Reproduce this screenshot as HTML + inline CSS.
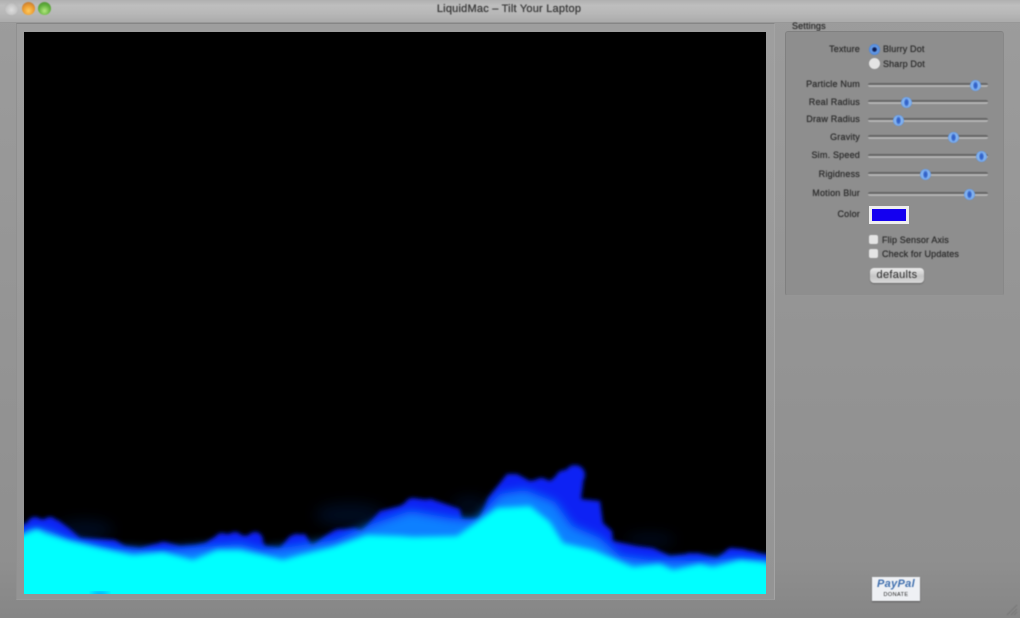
<!DOCTYPE html>
<html><head><meta charset="utf-8"><title>LiquidMac</title>
<style>
html,body{margin:0;padding:0;background:#8c8c8c}
#w{position:relative;width:1020px;height:618px;overflow:hidden;background:linear-gradient(#9c9c9c 0,#959595 300px,#8f8f8f 560px,#868686 618px);font-family:"Liberation Sans",sans-serif;color:#2a2a2a}
#w div{position:absolute}
#tb{left:0;top:0;width:1020px;height:22px;background:linear-gradient(#b0b0b0,#bebebe 25%,#b8b8b8 60%,#ababab)}
#in{left:16px;top:23px;width:759px;height:577px;box-sizing:border-box;background:linear-gradient(#9e9e9e,#949494);border-top:1px solid #868686;border-left:1px solid #909090;border-right:1px solid #a4a4a4;border-bottom:1px solid #9a9a9a}
.l{width:80px;left:780px;text-align:right;font-size:9px;letter-spacing:.2px;line-height:12px;color:#2e2e2e;text-shadow:0 0 .6px #333;filter:blur(.45px)}
.t{font-size:9px;letter-spacing:.15px;line-height:12px;color:#2e2e2e;text-shadow:0 0 .6px #333;filter:blur(.45px);white-space:nowrap}
.tr{left:868px;width:120px;height:4px;background:linear-gradient(#626262 0,#6c6c6c 45%,#b4b4b4 55%);filter:blur(.5px);border-radius:2px}
.k{width:11px;height:11px;border-radius:50%;background:radial-gradient(ellipse 25% 40% at 50% 50%,#2f5cc0 0,#3a6cd0 60%,transparent 100%),radial-gradient(circle,#9cc4f5 0,#7fb0ee 55%,#4a84dc 85%,#8aa8d8 100%);filter:blur(.4px)}
.cb{left:869px;width:9px;height:9px;background:#e4e4e4;border-radius:2px;filter:blur(.4px)}
.dot{border-radius:50%;width:13px;height:13px;top:2px;filter:blur(.5px)}
</style></head><body>
<div id="w">
<div id="tb"></div>
<div style="left:0;top:22px;width:1020px;height:1px;background:#989898"></div>
<div class="dot" style="left:5px;background:radial-gradient(circle at 50% 60%,#dedede,#c4c4c4 55%,#9a9a9a)"></div>
<div class="dot" style="left:22px;background:radial-gradient(circle at 50% 68%,#ffcb60,#ea9a30 50%,#a8683c)"></div>
<div class="dot" style="left:38px;background:radial-gradient(circle at 50% 68%,#b4e880,#5eae3a 55%,#4e8238)"></div>
<div style="left:300px;width:418px;top:2px;text-align:center;font-size:11px;letter-spacing:.22px;line-height:14px;color:#3a3a3a;text-shadow:0 0 .6px #333;filter:blur(.5px)">LiquidMac – Tilt Your Laptop</div>
<div id="in"></div>
<div style="left:24px;top:32px;width:742px;height:562px;background:#000;overflow:hidden">
<svg width="742" height="562" viewBox="24 32 742 562" style="display:block">
<defs>
<filter id="b0" x="-10%" y="-50%" width="120%" height="200%"><feGaussianBlur stdDeviation="7"/></filter>
<filter id="b1" x="-10%" y="-50%" width="120%" height="200%"><feGaussianBlur stdDeviation="2"/></filter>
<filter id="b2" x="-10%" y="-50%" width="120%" height="200%"><feGaussianBlur stdDeviation="5"/></filter>
<filter id="b3" x="-10%" y="-50%" width="120%" height="200%"><feGaussianBlur stdDeviation="2.8"/></filter>
</defs>
<g filter="url(#b0)" fill="#00205c" opacity=".35">
<ellipse cx="85" cy="530" rx="28" ry="10"/>
<ellipse cx="350" cy="515" rx="35" ry="12"/>
<ellipse cx="470" cy="505" rx="18" ry="8"/>
<ellipse cx="650" cy="540" rx="25" ry="6"/>
</g>
<g filter="url(#b1)" fill="#0a22f4">
<polygon points="14,530 24,524 40,519 58,520 70,529 80,538 115,540 125,546 140,548 155,544 165,542 180,546 195,545 205,543 218,535 235,533 245,536 258,532 265,546 280,548 290,536 305,534 312,546 325,536 335,530 355,528 362,531 380,511 400,506 413,498 437,501 460,509 462,519 480,519 488,498 507,474 517,474 530,481 543,478 550,481 562,471 577,466 584,471 583,484 581,499 600,501 603,523 612,531 613,541 637,546 653,548 670,556 697,553 717,558 730,548 743,549 750,551 776,557 776,610 14,610"/>
<circle cx="35" cy="525" r="8"/><circle cx="50" cy="525" r="8"/><circle cx="163" cy="549" r="7"/>
<circle cx="222" cy="541" r="8"/><circle cx="235" cy="540" r="8"/><circle cx="255" cy="540" r="8"/><circle cx="297" cy="543" r="9"/>
<circle cx="340" cy="537" r="8"/><circle cx="413" cy="507" r="9"/><circle cx="430" cy="508" r="9"/>
<circle cx="512" cy="483" r="9"/><circle cx="541" cy="486" r="8"/><circle cx="575" cy="475" r="10"/><circle cx="565" cy="480" r="10"/>
<circle cx="592" cy="510" r="9"/><circle cx="650" cy="555" r="7"/><circle cx="690" cy="560" r="7"/><circle cx="732" cy="556" r="8"/><circle cx="752" cy="558" r="7"/>
</g>
<polygon filter="url(#b2)" fill="#0c80ff" points="14,540 30,528 48,530 70,540 115,549 160,551 215,546 240,544 263,550 290,547 335,540 375,523 410,511 450,518 475,520 500,494 525,490 555,502 572,526 600,538 620,556 650,560 700,561 735,558 776,561 776,610 14,610"/>
<polygon filter="url(#b3)" fill="#00ffff" points="14,540 24,534 37,529 45,533 67,540 100,548 133,555 163,552 193,560 217,550 240,550 263,555 283,560 300,555 333,547 367,535 400,536 413,537 457,536 477,522 497,508 530,506 550,522 563,543 593,550 633,567 660,564 673,570 700,564 713,567 740,560 763,562 776,565 776,610 14,610"/>
<rect x="24" y="575" width="742" height="20" fill="#00ffff"/>
<ellipse cx="100" cy="594" rx="9" ry="1.5" fill="#1060ff" filter="url(#b3)"/>
</svg>
</div>
<div class="t" style="left:792px;top:20px;">Settings</div>
<div style="left:785px;top:31px;width:219px;height:265px;box-sizing:border-box;background:#8e8e8e;border:1px solid #808080;border-bottom-color:#969696;border-right-color:#888;border-radius:3px"></div>

<div class="l" style="top:43px">Texture</div>
<div class="k" style="left:869px;top:44px;background:radial-gradient(circle,#0a1a50 0,#0a1a50 20%,#6a9fe8 38%,#3f78d4 85%,#7fa0d4)"></div>
<div class="t" style="left:883px;top:43px">Blurry Dot</div>
<div class="k" style="left:869px;top:58px;background:#e4e4e4"></div>
<div class="t" style="left:883px;top:58px">Sharp Dot</div>

<div class="l" style="top:78px">Particle Num</div><div class="tr" style="top:83px"></div><div class="k" style="left:970px;top:80px"></div>
<div class="l" style="top:96px">Real Radius</div><div class="tr" style="top:100px"></div><div class="k" style="left:901px;top:97px"></div>
<div class="l" style="top:113px">Draw Radius</div><div class="tr" style="top:118px"></div><div class="k" style="left:893px;top:115px"></div>
<div class="l" style="top:131px">Gravity</div><div class="tr" style="top:135px"></div><div class="k" style="left:948px;top:132px"></div>
<div class="l" style="top:149px">Sim. Speed</div><div class="tr" style="top:154px"></div><div class="k" style="left:976px;top:151px"></div>
<div class="l" style="top:168px">Rigidness</div><div class="tr" style="top:172px"></div><div class="k" style="left:920px;top:169px"></div>
<div class="l" style="top:187px">Motion Blur</div><div class="tr" style="top:192px"></div><div class="k" style="left:964px;top:189px"></div>

<div class="l" style="top:208px">Color</div>
<div style="left:869px;top:206px;width:40px;height:18px;box-sizing:border-box;background:#1400f0;border:3px solid #eeeeee;filter:blur(.3px)"></div>
<div class="cb" style="top:235px"></div>
<div class="t" style="left:882px;top:234px">Flip Sensor Axis</div>
<div class="cb" style="top:249px"></div>
<div class="t" style="left:882px;top:248px">Check for Updates</div>
<div style="left:870px;top:268px;width:54px;height:15px;box-sizing:border-box;border-radius:4px;background:linear-gradient(#ececec,#c4c4c4 55%,#d8d8d8);box-shadow:0 1px 1px #666;text-align:center;font-size:11px;line-height:15px;letter-spacing:.3px;color:#2a2a2a;filter:blur(.4px)">defaults</div>

<div style="left:872px;top:577px;width:48px;height:24px;background:#eef0f4;box-shadow:0 1px 1px #555;filter:blur(.4px);text-align:center;overflow:hidden">
<div style="left:0;top:0;width:48px;font:italic bold 11px/15px 'Liberation Sans',sans-serif;color:#3f6fae;letter-spacing:.3px">PayPal</div>
<div style="left:0;top:14px;width:48px;font-size:5.5px;line-height:8px;letter-spacing:.4px;color:#222">DONATE</div>
</div>
<svg style="position:absolute;left:1006px;top:604px;filter:blur(.4px)" width="12" height="12"><path d="M1 11L11 1M5 11L11 5M8 11L11 8" stroke="#777" fill="none"/></svg>
</div>
</body></html>
